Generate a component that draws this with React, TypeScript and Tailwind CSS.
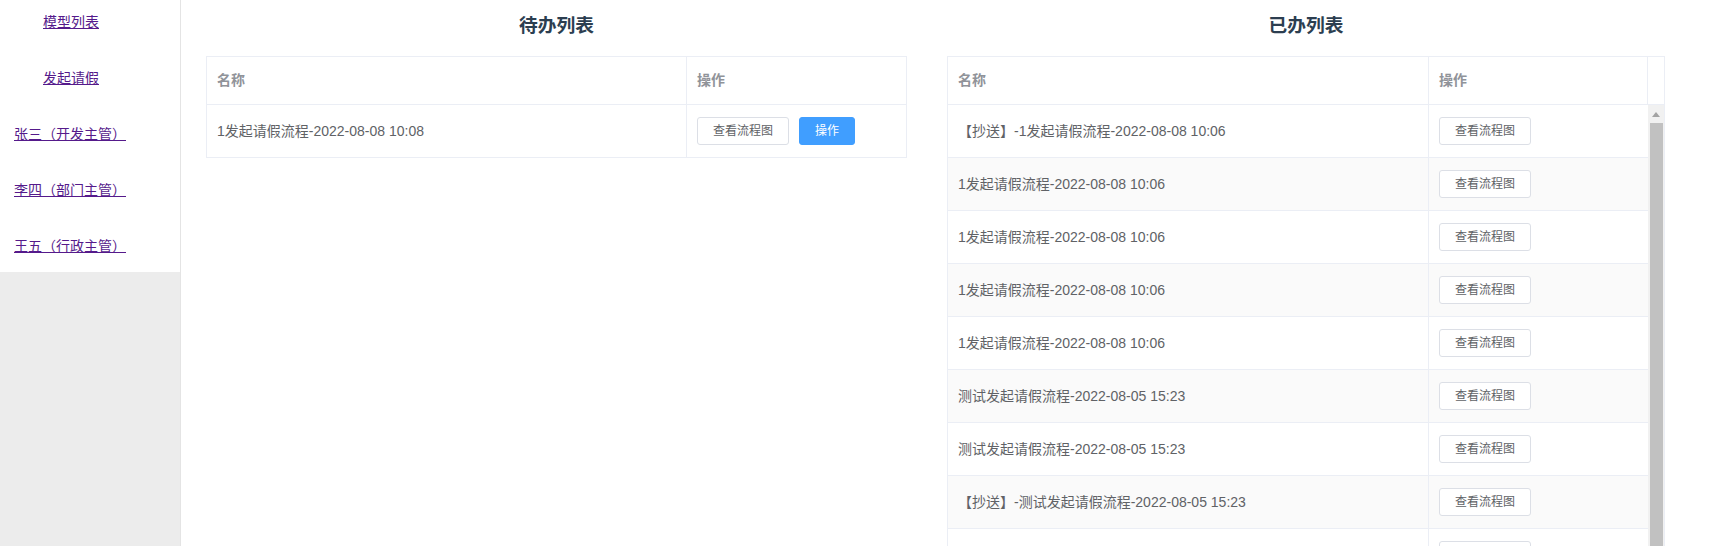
import React from "react";

const todoList = ["1发起请假流程-2022-08-08 10:08"];

const doneList = [
  "【抄送】-1发起请假流程-2022-08-08 10:06",
  "1发起请假流程-2022-08-08 10:06",
  "1发起请假流程-2022-08-08 10:06",
  "1发起请假流程-2022-08-08 10:06",
  "1发起请假流程-2022-08-08 10:06",
  "测试发起请假流程-2022-08-05 15:23",
  "测试发起请假流程-2022-08-05 15:23",
  "【抄送】-测试发起请假流程-2022-08-05 15:23",
  "测试发起请假流程-2022-08-05 15:23",
];

const font = "font-['Liberation_Sans','Noto_Sans_CJK_SC',sans-serif]";

function PlainButton({ children }: { children: React.ReactNode }) {
  return (
    <button className="h-[28px] px-[15px] text-[12px] leading-none text-[#606266] bg-white border border-[#dcdfe6] rounded-[3px]">
      {children}
    </button>
  );
}

function PrimaryButton({ children }: { children: React.ReactNode }) {
  return (
    <button className="h-[28px] px-[15px] text-[12px] leading-none text-white bg-[#409eff] border border-[#409eff] rounded-[3px]">
      {children}
    </button>
  );
}

function Sidebar() {
  const links = [
    { text: "模型列表", indent: "pl-[43px]" },
    { text: "发起请假", indent: "pl-[43px]" },
    { text: "张三（开发主管）", indent: "pl-[14px]" },
    { text: "李四（部门主管）", indent: "pl-[14px]" },
    { text: "王五（行政主管）", indent: "pl-[14px]" },
  ];
  return (
    <div className="w-[181px] shrink-0 bg-[#ececec] border-r border-[#e4e4e4]">
      <div className="h-[272px] bg-white pt-[12px] flex flex-col gap-[36px]">
        {links.map((l, i) => (
          <div key={i} className={`${l.indent} h-[20px] leading-[20px]`}>
            <a href="#" className="text-[14px] text-[#551a8b] underline">
              {l.text}
            </a>
          </div>
        ))}
      </div>
    </div>
  );
}

function Title({ children }: { children: React.ReactNode }) {
  return (
    <div className="h-[56px] pt-[14px] text-center">
      <h3 className="text-[18.72px] leading-[24px] font-bold text-[#2c3e50]">{children}</h3>
    </div>
  );
}

function TodoTable() {
  return (
    <div className="w-[701px]">
      <Title>待办列表</Title>
      <div className="border-t border-l border-r border-[#ebeef5] text-[14px]">
        <div className="flex h-[48px] border-b border-[#ebeef5] font-bold text-[#909399]">
          <div className="w-[480px] border-r border-[#ebeef5] pl-[10px] flex items-center">名称</div>
          <div className="flex-1 pl-[10px] flex items-center">操作</div>
        </div>
        {todoList.map((name, i) => (
          <div key={i} className="flex h-[53px] border-b border-[#ebeef5] text-[#606266]">
            <div className="w-[480px] border-r border-[#ebeef5] pl-[10px] flex items-center">{name}</div>
            <div className="flex-1 pl-[10px] flex items-center gap-[10px]">
              <PlainButton>查看流程图</PlainButton>
              <PrimaryButton>操作</PrimaryButton>
            </div>
          </div>
        ))}
      </div>
    </div>
  );
}

function DoneTable() {
  return (
    <div className="w-[718px]">
      <Title>已办列表</Title>
      <div className="border-t border-l border-r border-[#ebeef5] text-[14px]">
        <div className="flex h-[48px] border-b border-[#ebeef5] font-bold text-[#909399]">
          <div className="w-[481px] border-r border-[#ebeef5] pl-[10px] flex items-center">名称</div>
          <div className="w-[219px] border-r border-[#ebeef5] pl-[10px] flex items-center">操作</div>
          <div className="flex-1" />
        </div>
        <div className="flex">
          <div className="w-[700px]">
            {doneList.map((name, i) => (
              <div
                key={i}
                className={`flex h-[53px] border-b border-[#ebeef5] text-[#606266] ${
                  i % 2 === 1 ? "bg-[#fafafa]" : "bg-white"
                }`}
              >
                <div className="w-[481px] border-r border-[#ebeef5] pl-[10px] flex items-center">{name}</div>
                <div className="flex-1 pl-[10px] flex items-center">
                  <PlainButton>查看流程图</PlainButton>
                </div>
              </div>
            ))}
          </div>
          <div className="flex-1 bg-[#f1f1f1] flex flex-col items-center">
            <div className="h-[18px] flex items-center justify-center">
              <svg width="8" height="5" viewBox="0 0 8 5">
                <polygon points="4,0 8,5 0,5" fill="#a3a3a3" />
              </svg>
            </div>
            <div className="w-[13px] h-[500px] bg-[#c1c1c1]" />
          </div>
        </div>
      </div>
    </div>
  );
}

export default function App() {
  return (
    <div className={`flex h-[546px] overflow-hidden bg-white ${font}`}>
      <Sidebar />
      <div className="flex-1 flex pl-[25px] gap-[40px]">
        <TodoTable />
        <DoneTable />
      </div>
    </div>
  );
}
